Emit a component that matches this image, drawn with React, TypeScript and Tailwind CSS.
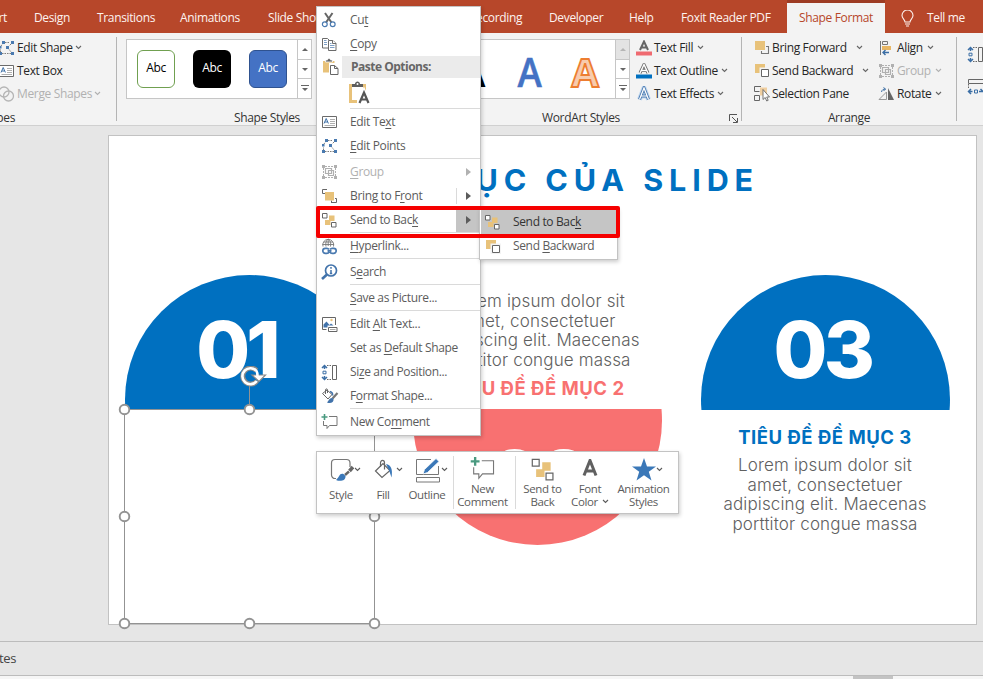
import React from 'react';

type IconProps = { className?: string };

const Caret = ({ className = '' }: IconProps) => (
  <svg className={`shrink-0 ${className}`} width="7" height="5" viewBox="0 0 7 5" fill="none" stroke="currentColor" strokeWidth="1.1">
    <path d="M1 1l2.500 2.500L6 1" />
  </svg>
);

const EditPointsIcon = () => (
  <svg className="shrink-0" width="17" height="16" viewBox="0 0 17 16" fill="none">
    <path d="M2.500 12V9M3 6l2-3M7 2.500h5M13 4l-3.500 3.500 4 5M4 13.500h9" stroke="#7d7d7d" strokeDasharray="1.500 1" />
    <path d="M4 1h3v3H4zM13 1h3v3h-3zM8 6h3v3H8zM1 6h2.500v2.500H1z" fill="#4a7ab0" />
    <path d="M1 12h3v3H1zM13 12h3v3h-3z" fill="#4a7ab0" />
  </svg>
);

const TextBoxIcon = () => (
  <svg className="shrink-0" width="17" height="14" viewBox="0 0 17 14" fill="none">
    <path d="M1.500 1.500h14v11h-14z" fill="#fff" stroke="#6b6b6b" />
    <path d="M3 8.500L5.200 3.500 7.400 8.500M4 7h2.500" stroke="#3b6ea5" />
    <path d="M9 4.500h5M9 6.500h5M9 8.500h5M3.500 10.500H14" stroke="#9a9a9a" strokeWidth=".8" />
  </svg>
);

const MergeIcon = () => (
  <svg className="shrink-0" width="17" height="16" viewBox="0 0 17 16" fill="none" stroke="#b5b5b5" strokeWidth="1.300">
    <circle cx="6" cy="6" r="5" />
    <circle cx="10.500" cy="10" r="5" />
  </svg>
);

const GroupIcon = () => (
  <svg className="shrink-0" width="17" height="16" viewBox="0 0 17 16" fill="none" stroke="#b0b0b0">
    <path d="M4 2.500h9M4 13.500h9M2.500 4v8M14.500 4v8" strokeDasharray="2 1" />
    <path d="M4.500 4.500h6v5h-6zM7.500 6.500h5v5h-5z" strokeWidth="1.200" />
    <path d="M1 1h3v3H1zM13 1h3v3h-3zM1 12h3v3H1zM13 12h3v3h-3z" fill="#b0b0b0" stroke="none" />
  </svg>
);

const SendBackIcon = ({ size = 17, className = '' }: { size?: number; className?: string }) => (
  <svg className={`shrink-0 ${className}`} width={size} height={size} viewBox="0 0 17 17" fill="none">
    <path d="M8 3.500h5.500v5.500H8zM4 8h5.500v5H4z" fill="#e8c27a" />
    <path d="M1.500 1.500h4.500V6H1.500zM10.500 10.500h4.500V15h-4.500z" fill="#fff" stroke="#666" strokeWidth={size > 20 ? 0.8 : 1} />
  </svg>
);

const BringFrontIcon = () => (
  <svg className="shrink-0" width="17" height="16" viewBox="0 0 17 16" fill="none">
    <path d="M1.500 5.500V1.500H6M4 5.500H1.500M10 14.500h5.500V10.500H14M10.500 12.500v2" stroke="#666" />
    <path d="M4 4h9v8.500H4z" fill="#e8c27a" />
  </svg>
);

const ForwardIcon = () => (
  <svg className="shrink-0" width="16" height="15" viewBox="0 0 16 15" fill="none">
    <path d="M1 1h10v9H1z" fill="#e8c27a" />
    <path d="M12 6.500h2.500V13.500H7.500V11" stroke="#777" strokeWidth="1.100" />
  </svg>
);

const BackwardIcon = () => (
  <svg className="shrink-0" width="16" height="15" viewBox="0 0 16 15" fill="none">
    <path d="M1 1h10v9H1z" fill="#e8c27a" />
    <path d="M7 6h7.500v7.500H7z" fill="#fff" stroke="#f3f3f3" strokeWidth="3" />
    <path d="M7.500 6.500h7v7h-7z" fill="#fff" stroke="#666" />
  </svg>
);

const SelectionPaneIcon = () => (
  <svg className="shrink-0" width="17" height="17" viewBox="0 0 17 17" fill="none">
    <path d="M7 2.500h7v8H7z" fill="#f0cfa0" />
    <path d="M6.500 6.500h-5v-5H8M1.500 10.500h5v5h-5z" stroke="#666" />
    <path d="M10 4.500v10l2.200-2 1.500 3.500 1.500-.7-1.500-3.300h2.800z" fill="#fff" stroke="#666" strokeWidth=".9" />
  </svg>
);

const AlignIcon = () => (
  <svg className="shrink-0" width="15" height="16" viewBox="0 0 15 16" fill="none">
    <path d="M1.500 1v14" stroke="#777" />
    <path d="M3.500 1.500h5v3h-5z" stroke="#777" />
    <path d="M3 6h9v4H3z" fill="#e8b765" />
    <path d="M10 12.500H4M6.500 10L4 12.500 6.500 15" stroke="#3b6ea5" strokeWidth="1.400" />
  </svg>
);

const RotateIcon = () => (
  <svg className="shrink-0" width="17" height="14" viewBox="0 0 17 14" fill="none">
    <path d="M8.500 5v7.500H1z" stroke="#999" />
    <path d="M10 1v12h6z" fill="#666" />
    <path d="M3.500 5c.5-2.500 2-3 4-3M5.500.5L7.500 2 5.500 4" stroke="#3b6ea5" />
  </svg>
);

const ScissorsIcon = () => (
  <svg width="16" height="16" viewBox="0 0 16 16" fill="none">
    <path d="M4 1l6.500 9.500M11.500 1L5 10.500" stroke="#666" strokeWidth="2" />
    <circle cx="3.800" cy="12.200" r="2.400" stroke="#4a7ab0" strokeWidth="1.200" />
    <circle cx="11.700" cy="12.200" r="2.400" stroke="#4a7ab0" strokeWidth="1.200" />
  </svg>
);

const CopyIcon = () => (
  <svg width="16" height="15" viewBox="0 0 16 15" fill="#fff" stroke="#6b6b6b">
    <path d="M1.500 1.500h5l2.500 2.500v7H1.500z" />
    <path d="M3 5.500h3M3 7.500h3M3 3.500h2.500" stroke="#7fa0c5" />
    <path d="M7.500 3.500h4.500l3 3v7H7.500z" />
    <path d="M11.500 3.500v3H15" />
    <path d="M9 8.500h4.500M9 10.500h4.500M9 6.500h1.500" stroke="#7fa0c5" />
  </svg>
);

const PasteIcon = () => (
  <svg width="17" height="17" viewBox="0 0 17 17" fill="none">
    <path d="M1 3h11.500v11.500H1z" fill="#e8c27a" />
    <path d="M3.500 4V2h2c0-2 3-2 3 0h2v2z" fill="#666" stroke="#fff" strokeWidth=".8" />
    <path d="M8.500 6.500h4l3.500 3.500v6H8.500z" fill="#fff" stroke="#fff" strokeWidth="3" />
    <path d="M8.500 7.500h4l3.500 3v6H8.500zM12.500 7.500v3H16" fill="#fff" stroke="#666" />
  </svg>
);

const PasteTextIcon = () => (
  <svg className="shrink-0" width="24" height="24" viewBox="0 0 24 24" fill="none">
    <path d="M10 20.500H3.500V4.500h14v6" stroke="#e8c27a" strokeWidth="3" />
    <path d="M5 6V3h3c0-3.500 5-3.500 5 0h3v3z" fill="#5e5e5e" />
    <circle cx="10.500" cy="3" r="1" fill="#fff" />
    <path d="M12.500 21.500L17 11.500l4.500 10M14 18.500h6" stroke="#fff" strokeWidth="5" />
    <path d="M12.500 22L17 11.500 21.500 22M14 18.500h6" stroke="#555" strokeWidth="2.200" />
  </svg>
);

const LinkIcon = () => (
  <svg width="17" height="17" viewBox="0 0 17 17" fill="none">
    <path d="M2 8.500a5.500 5.500 0 1 1 10.500 0M2.500 4h9.500M1.500 6.500h11.500M7.200 1v7M5 8.500c-.7-3 0-6 2.200-7.500C9.500 2.500 10.200 5.500 9.500 8.500" stroke="#777" strokeWidth=".9" />
    <path d="M8 11.500a2.700 2.700 0 0 0-2.500-1.200H4.300a2.500 2.500 0 0 0 0 5h1.500c1.300 0 2-.7 2.400-1.500M6.500 12.800h4M9 11.500a2.700 2.700 0 0 1 2.500-1.200h1.200a2.500 2.500 0 0 1 0 5h-1.500c-1.300 0-2-.7-2.400-1.500" stroke="#4a7ab0" strokeWidth="1.700" />
  </svg>
);

const SearchIcon = () => (
  <svg width="17" height="16" viewBox="0 0 17 16" fill="none" stroke="#4273ab">
    <circle cx="10" cy="6.500" r="5.500" strokeWidth="1.700" />
    <path d="M6 10.500l-5 4.500" strokeWidth="2.600" />
    <path d="M10 6v3.500M10 3v1.700M8.800 9.500h2.400" strokeWidth="1.500" />
  </svg>
);

const AltTextIcon = () => (
  <svg width="17" height="17" viewBox="0 0 17 17" fill="none">
    <path d="M5.500 13.500h-4v-12h13V9" stroke="#666" />
    <path d="M2.500 11.500V8.500l3-3 3 3.500 1.500-1.500 2.500 2H6.500v2z" fill="#4273ab" />
    <circle cx="10.500" cy="4" r="1.200" fill="#e8c27a" />
    <path d="M7.500 11.500h8.500v4H7.500z" fill="#fff" stroke="#666" />
    <path d="M9 13.500h5.500" stroke="#aaa" />
  </svg>
);

const SizeIcon = ({ className = '' }: IconProps) => (
  <svg className={`shrink-0 ${className}`} width="17" height="17" viewBox="0 0 17 17" fill="none">
    <path d="M6 1.500h5M6 15.500h5" stroke="#666" strokeDasharray="1.500 1" />
    <path d="M11.500 1.500h4v14h-4z" stroke="#666" />
    <path d="M3.500 1.500V5M1 4l2.500-2.500L6 4M3.500 12v3.500M1 13l2.500 2.500L6 13" stroke="#3b6ea5" strokeWidth="1.500" />
    <path d="M2 7.200h3v2.600H2z" stroke="#3b6ea5" />
  </svg>
);

const WidthIcon = () => (
  <svg width="17" height="17" viewBox="0 0 17 17" fill="none">
    <path d="M16.500 1.500h-15v4h15" stroke="#666" />
    <path d="M1.500 6v5" stroke="#666" strokeDasharray="1.500 1" />
    <path d="M1 13.500h4.500M4 11l-2.500 2.500L4 16M12 13.500h4.500M13.500 11l2.500 2.500" stroke="#3b6ea5" strokeWidth="1.500" />
    <path d="M7.500 12h3v3h-3z" stroke="#3b6ea5" />
  </svg>
);

const FormatIcon = () => (
  <svg width="18" height="17" viewBox="0 0 18 17" fill="none">
    <path d="M1.500 5.500L6 2l5 4.500L7 11zM4.500 6V2c0-1.500 2-1.500 2 0v3" stroke="#666" />
    <path d="M9 3.500c2 .5 3 2 2.500 4" stroke="#4273ab" strokeWidth="1.500" />
    <path d="M16.500 5l-5 5.500" stroke="#777" strokeWidth="2.200" />
    <path d="M11.500 10c-3-.5-3.500 2-5.500 4.500 3.500 1.500 7 0 6.500-3.500z" fill="#4273ab" />
  </svg>
);

const CommentIcon = ({ size = 17, stroke = 1 }: { size?: number; stroke?: number }) => (
  <svg className="shrink-0" width={size} height={size} viewBox="0 0 17 17" fill="none">
    <path d="M8 2.500h8v9H8.500L6 14.500v-3H2.500V7" stroke="#777" strokeWidth={stroke} />
    <path d="M3.500 0v6M.5 3h6" stroke="#4a9a80" strokeWidth="1.600" />
  </svg>
);

const Gallery = ({ children, disabledUp }: { children: React.ReactNode; disabledUp?: boolean }) => (
  <div className="flex h-[60px] w-full border border-[#c6c6c6] bg-white">
    <div className="flex flex-1 items-center">{children}</div>
    <div className="flex w-[14px] flex-col border-l border-[#c6c6c6] text-[#666]">
      <div className={`flex h-5 items-center justify-center border-b border-[#c6c6c6] ${disabledUp ? 'bg-[#e3e3e3] text-[#b5b5b5]' : ''}`}>
        <svg width="6" height="3" viewBox="0 0 6 3" fill="currentColor"><path d="M0 3l3-3 3 3z" /></svg>
      </div>
      <div className="flex h-[19px] items-center justify-center border-b border-[#c6c6c6]">
        <svg width="6" height="3" viewBox="0 0 6 3" fill="currentColor"><path d="M0 0l3 3 3-3z" /></svg>
      </div>
      <div className="flex h-[19px] items-center justify-center">
        <svg width="8" height="7" viewBox="0 0 8 7" fill="currentColor"><path d="M0 0h8v1H0zM1 3l3 3 3-3z" /></svg>
      </div>
    </div>
  </div>
);

type RowProps = { icon: React.ReactNode; label: string; caret?: string; disabled?: boolean };

const RibbonRow = ({ icon, label, caret, disabled }: RowProps) => (
  <div className={`flex h-[23px] items-center whitespace-nowrap ${disabled ? 'text-[#b1b1b1]' : 'text-[#262626]'}`}>
    <span className="mr-[2px] flex w-[17px] shrink-0 justify-center">{icon}</span>
    {label}
    {caret && <Caret className={`${caret} ${disabled ? '' : 'text-[#666]'}`} />}
  </div>
);

const tabs = [
  { label: 'Design', width: 'w-[63px]' },
  { label: 'Transitions', width: 'w-[83px]' },
  { label: 'Animations', width: 'w-[88px]' },
  { label: 'Slide Show', width: 'w-[117px]' },
  { label: 'Review', width: 'w-[84px]' },
  { label: 'Recording', width: 'w-[80px]' },
  { label: 'Developer', width: 'w-[80px]' },
  { label: 'Help', width: 'w-[52px]' },
  { label: 'Foxit Reader PDF', width: 'w-[106px]' },
];

function TabBar() {
  return (
    <div className="flex h-[33px] bg-[#b7472a] pt-[3px] text-[#fdf3f0]">
      <div className="flex w-[34px] shrink-0 items-center">
        <span className="flex w-[7px] justify-end">Insert</span>
      </div>
      {tabs.map((tab) => (
        <div key={tab.label} className={`flex shrink-0 items-center whitespace-nowrap ${tab.width}`}>
          {tab.label}
        </div>
      ))}
      <div className="-mt-[3px] flex w-[98px] shrink-0 items-center justify-center border-t-[3px] border-[#9d3c24] bg-[#f3f3f3] text-[#b7472a]">
        Shape Format
      </div>
      <div className="ml-4 flex items-center gap-[13px] whitespace-nowrap">
        <svg width="13" height="17" viewBox="0 0 13 17" fill="none" stroke="currentColor" strokeWidth="1.100">
          <path d="M4 12c0-2.500-3-3.500-3-6.500a5.500 5.500 0 0 1 11 0c0 3-3 4-3 6.500zM4 14h5M5 16h3" />
        </svg>
        Tell me
      </div>
    </div>
  );
}

const GroupLabel = ({ children }: { children: React.ReactNode }) => (
  <div className="mt-1 flex h-[18px] items-center justify-center whitespace-nowrap text-[#333]">{children}</div>
);

const Divider = () => <div className="mt-[1px] h-[84px] w-px shrink-0 bg-[#b4b4b4]" />;

function Ribbon() {
  return (
    <div className="flex h-[93px] border-b border-[#d0d0d0] bg-[#f3f3f3] pt-[3px]">
      <div className="w-[116px] shrink-0 overflow-hidden">
        <div className="-ml-[2px]">
          <RibbonRow icon={<EditPointsIcon />} label="Edit Shape" caret="ml-[2px]" />
          <RibbonRow icon={<TextBoxIcon />} label="Text Box" />
          <RibbonRow icon={<MergeIcon />} label="Merge Shapes" caret="ml-[2px]" disabled />
        </div>
        <div className="mt-1 flex h-[18px] w-[15px] items-center justify-end whitespace-nowrap text-[#333]">Insert Shapes</div>
      </div>
      <Divider />
      <div className="w-[300px] shrink-0 pl-[9px]">
        <div className="h-[69px] w-[186px] pt-[3px]">
          <Gallery>
            <div className="flex gap-[18px] pl-[10px] leading-none">
              <div className="flex size-[38px] items-center justify-center rounded-md border border-[#70a050] pb-[2px] text-black">Abc</div>
              <div className="flex size-[38px] items-center justify-center rounded-md bg-black pb-[2px] text-white">Abc</div>
              <div className="flex size-[38px] items-center justify-center rounded-md border border-[#2f528f] bg-[#4472c4] pb-[2px] text-white">Abc</div>
            </div>
          </Gallery>
        </div>
        <div className="pr-[9px]">
          <GroupLabel>Shape Styles</GroupLabel>
        </div>
      </div>
      <div className="w-[324px] shrink-0 pl-[9px]">
        <div className="flex">
          <div className="h-[69px] w-[204px] pt-[3px]">
            <Gallery disabledUp>
              <svg width="188" height="58" viewBox="0 0 188 58" fontFamily="'Open Sans', sans-serif" fontSize="40" fontWeight="600" textAnchor="middle">
                <text x="45" y="47" fill="#000">A</text>
                <text x="102.500" y="47" fill="#4472c4" textLength="24" lengthAdjust="spacingAndGlyphs" stroke="#4472c4" strokeWidth=".5">A</text>
                <text x="158" y="47" fill="#f8cbad" stroke="#ed7d31" strokeWidth="1.800" fontWeight="700" textLength="27" lengthAdjust="spacingAndGlyphs">A</text>
              </svg>
            </Gallery>
          </div>
          <div className="ml-[5px]">
            <RibbonRow
              icon={
                <svg width="16" height="16" viewBox="0 0 16 16" fill="none">
                  <path d="M4 10L8 1.500 12 10M5.500 7.500h5" stroke="#666" strokeWidth="2" />
                  <path d="M0 11.500h16v4H0z" fill="#ef6a70" />
                </svg>
              }
              label="Text Fill"
              caret="ml-1"
            />
            <RibbonRow
              icon={
                <svg width="16" height="16" viewBox="0 0 16 16" fill="none">
                  <path d="M4 10L8 1.500 12 10M5.500 7.500h5" stroke="#666" strokeWidth="3" />
                  <path d="M4 10L8 1.500 12 10M5.500 7.500h5" stroke="#fff" strokeWidth="1.400" />
                  <path d="M0 11.500h16v4H0z" fill="#0070c0" />
                </svg>
              }
              label="Text Outline"
              caret="ml-[3px]"
            />
            <RibbonRow
              icon={
                <svg width="16" height="16" viewBox="0 0 16 16" fill="none">
                  <path d="M3.500 13.500L8 2l4.500 11.500M5 10h6" stroke="#c3d9f0" strokeWidth="5" strokeLinejoin="round" />
                  <path d="M3.500 13.500L8 2l4.500 11.500M5 10h6" stroke="#4a7ab0" strokeWidth="3" />
                  <path d="M3.500 13.500L8 2l4.500 11.500M5 10h6" stroke="#fff" strokeWidth="1.200" />
                </svg>
              }
              label="Text Effects"
              caret="ml-[3px]"
            />
          </div>
        </div>
        <div className="mt-1 flex h-[18px] items-center text-[#333]">
          <span className="ml-[116px] flex-1 whitespace-nowrap">WordArt Styles</span>
          <svg className="mr-[3px]" width="9" height="9" viewBox="0 0 9 9" fill="none" stroke="#555">
            <path d="M.5 7V.5H8M3 3l5 5M8.500 4v4.500H4" />
          </svg>
        </div>
      </div>
      <Divider />
      <div className="w-[214px] shrink-0">
        <div className="flex pl-[11px]">
          <div className="w-[125px]">
            <RibbonRow icon={<ForwardIcon />} label="Bring Forward" caret="ml-[9px]" />
            <RibbonRow icon={<BackwardIcon />} label="Send Backward" caret="ml-[9px]" />
            <RibbonRow icon={<SelectionPaneIcon />} label="Selection Pane" />
          </div>
          <div>
            <RibbonRow icon={<AlignIcon />} label="Align" caret="ml-1" />
            <RibbonRow icon={<GroupIcon />} label="Group" caret="ml-1" disabled />
            <RibbonRow icon={<RotateIcon />} label="Rotate" caret="ml-[3px]" />
          </div>
        </div>
        <GroupLabel>Arrange</GroupLabel>
      </div>
      <Divider />
      <div className="mt-[10px] ml-[10px] flex w-4 flex-col gap-[15px] overflow-hidden">
        <SizeIcon />
        <WidthIcon />
      </div>
    </div>
  );
}

const bodyLines = ['Lorem ipsum dolor sit', 'amet, consectetuer', 'adipiscing elit. Maecenas', 'porttitor congue massa'];

const Body = () => (
  <div className="text-center text-[17px] leading-[19.6px] font-light tracking-[0.15px] whitespace-nowrap text-[#606060]">
    {bodyLines.map((line) => (
      <div key={line}>{line}</div>
    ))}
  </div>
);

const Handle = ({ x, y }: { x: number; y: number }) => (
  <circle cx={x} cy={y} r="4.800" fill="#fff" stroke="#939393" strokeWidth="1.900" />
);

// Positions on the slide are measured from its top-left corner.
function Slide() {
  return (
    <div className="relative mt-[9px] ml-[108px] h-[490px] w-[869px] border border-[#c2c2c2] bg-white font-[Inter,'Noto_Sans',sans-serif]">
      <div className="absolute top-[24px] right-[217px] text-[30.5px] leading-[40px] font-bold tracking-[5.9px] whitespace-nowrap text-[#0070c0]">
        MỤC LỤC CỦA SLIDE
      </div>

      <div className="absolute top-[139px] left-[16px] h-[135px] w-[249px] overflow-hidden">
        <div className="h-[249px] rounded-full bg-[#0070c0] pt-[25px] pr-[26px] text-center text-[78px] leading-[100px] font-extrabold tracking-[-4px] text-white">01</div>
      </div>

      <div className="absolute top-[156px] left-[304px] w-[250px]">
        <Body />
      </div>
      <div className="absolute top-[240px] left-[304px] w-[250px] text-center text-[18.5px] leading-6 font-bold tracking-[0.5px] whitespace-nowrap text-[#f87171]">
        TIÊU ĐỀ ĐỀ MỤC 2
      </div>
      <div className="absolute top-[273px] left-[304px] flex h-[136px] w-[249px] items-end overflow-hidden">
        <div className="h-[249px] w-[249px] shrink-0 rounded-full bg-[#f87171] pt-[133px] text-center text-[78px] leading-[100px] font-extrabold tracking-[-2px] text-white">02</div>
      </div>

      <div className="absolute top-[139px] left-[592px] h-[135px] w-[249px] overflow-hidden">
        <div className="h-[249px] rounded-full bg-[#0070c0] pt-[25px] pr-[6px] text-center text-[78px] leading-[100px] font-extrabold tracking-[-3.500px] text-white">03</div>
      </div>
      <div className="absolute top-[289px] left-[591px] w-[250px] text-center text-[18.5px] leading-6 font-bold tracking-[0.5px] whitespace-nowrap text-[#0070c0]">
        TIÊU ĐỀ ĐỀ MỤC 3
      </div>
      <div className="absolute top-[320px] left-[591px] w-[250px]">
        <Body />
      </div>

      <svg className="absolute top-[230px] left-[9px]" width="264" height="265" viewBox="0 0 264 265" fill="none">
        <path d="M6.500 43.500h250V257.500H6.500zM131.500 19v20" stroke="#939393" />
        <path d="M138.500 4.500a8 8 0 1 0 .5 10.500" stroke="#8a8a8a" strokeWidth="5" />
        <path d="M134 9h13.500l-6.500 6.500z" fill="#fff" stroke="#8a8a8a" strokeWidth="1.200" />
        <path d="M139.500 10.500c0-2-.3-4.500-1-5.500a8 8 0 1 0 .3 10" stroke="#fff" strokeWidth="2.600" />
        <Handle x={6.5} y={43.5} />
        <Handle x={131.5} y={43.5} />
        <Handle x={6.5} y={150.5} />
        <Handle x={256.5} y={150.5} />
        <Handle x={6.5} y={257.5} />
        <Handle x={131.5} y={257.5} />
        <Handle x={256.5} y={257.5} />
      </svg>
    </div>
  );
}

// Underlines the access key: the letter that follows "_".
const Label = ({ text }: { text: string }) => {
  const [before, rest] = text.split('_');
  return (
    <span className="whitespace-nowrap">
      {before}
      {rest && <span className="underline underline-offset-2">{rest[0]}</span>}
      {rest?.slice(1)}
    </span>
  );
};

const RightArrow = () => (
  <svg width="5" height="8" viewBox="0 0 5 8" fill="currentColor"><path d="M0 0l5 4-5 4z" /></svg>
);

type MenuItemProps = { icon?: React.ReactNode; label: string; disabled?: boolean; children?: React.ReactNode };

const MenuItem = ({ icon, label, disabled, children }: MenuItemProps) => (
  <div className={`flex h-6 items-center ${disabled ? 'text-[#b1b1b1]' : ''}`}>
    <span className="flex w-[33px] shrink-0 pl-1">{icon}</span>
    <span className="flex-1"><Label text={label} /></span>
    {children}
  </div>
);

const Separator = () => <div className="ml-[33px] h-[2px] border-t border-[#dadada]" />;

function ContextMenu() {
  return (
    <div className="absolute top-[6px] left-[316px] h-[430px] w-[165px] border border-[#c3c3c3] bg-white pt-px text-[#5c5c5c] shadow-[1px_2px_4px_rgba(0,0,0,0.2)]">
      <MenuItem icon={<ScissorsIcon />} label="Cu_t" />
      <MenuItem icon={<CopyIcon />} label="_Copy" />
      <div className="flex h-[22px]">
        <span className="w-[25px] shrink-0 pt-[2px] pl-[5px]"><PasteIcon /></span>
        <span className="flex flex-1 items-center bg-[#ebebeb] pl-[9px] font-bold tracking-[-0.5px] text-[#666]">Paste Options:</span>
      </div>
      <div className="flex h-[30px] pt-[3px] pl-[30px]"><PasteTextIcon /></div>
      <Separator />
      <MenuItem icon={<TextBoxIcon />} label="Edit Te_xt" />
      <MenuItem icon={<EditPointsIcon />} label="_Edit Points" />
      <Separator />
      <MenuItem icon={<GroupIcon />} label="_Group" disabled>
        <span className="pr-[9px]"><RightArrow /></span>
      </MenuItem>
      <MenuItem icon={<BringFrontIcon />} label="Bring to F_ront">
        <span className="flex h-4 w-6 items-center border-l border-[#dadada] pl-[9px]"><RightArrow /></span>
      </MenuItem>
      <MenuItem icon={<SendBackIcon />} label="Send to Bac_k">
        <span className="flex h-6 w-6 items-center bg-[#c5c5c5] pl-[10px]"><RightArrow /></span>
      </MenuItem>
      <Separator />
      <MenuItem icon={<LinkIcon />} label="_Hyperlink..." />
      <Separator />
      <MenuItem icon={<SearchIcon />} label="S_earch" />
      <Separator />
      <MenuItem label="_Save as Picture..." />
      <Separator />
      <MenuItem icon={<AltTextIcon />} label="Edit _Alt Text..." />
      <MenuItem label="Set as _Default Shape" />
      <MenuItem icon={<SizeIcon />} label="Si_ze and Position..." />
      <MenuItem icon={<FormatIcon />} label="F_ormat Shape..." />
      <Separator />
      <MenuItem icon={<CommentIcon />} label="New Co_mment" />
    </div>
  );
}

function SubMenu() {
  return (
    <div className="absolute top-[208px] left-[479px] h-[52px] w-[139px] border border-[#c3c3c3] bg-white p-px text-[#5c5c5c] shadow-[1px_2px_4px_rgba(0,0,0,0.2)]">
      <div className="flex h-6 items-center bg-[#c5c5c5] text-[#333]">
        <span className="w-8 shrink-0 pl-[3px]"><SendBackIcon /></span>
        <Label text="Send to Bac_k" />
      </div>
      <div className="flex h-6 items-center">
        <span className="w-8 shrink-0 pl-1"><BackwardIcon /></span>
        <Label text="Send _Backward" />
      </div>
    </div>
  );
}

type ToolProps = { icon: React.ReactNode; lines: string[]; width: string; caret?: boolean; lineCaret?: boolean };

const Tool = ({ icon, lines, width, caret, lineCaret }: ToolProps) => (
  <div className={`flex shrink-0 flex-col items-center text-[11.5px] leading-[13px] tracking-[-0.35px] ${width}`}>
    <div className="flex h-[30px] items-center pt-[5px]">
      {icon}
      {caret && <Caret />}
    </div>
    <div className={`text-center whitespace-nowrap ${lines.length === 1 ? 'pt-[6px]' : ''}`}>
      {lines.map((line, i) => (
        <div key={line} className="flex items-center justify-center gap-1">
          {line}
          {lineCaret && i === 1 && <Caret />}
        </div>
      ))}
    </div>
  </div>
);

function MiniToolbar() {
  return (
    <div className="absolute top-[451px] left-[316px] flex h-[63px] w-[363px] border border-[#c3c3c3] bg-white text-[#5c5c5c] shadow-[1px_2px_4px_rgba(0,0,0,0.2)]">
      <Tool
        width="w-[48px]"
        caret
        lines={['Style']}
        icon={
          <svg className="ml-[8px]" width="24" height="26" viewBox="0 0 24 26" fill="none">
            <path d="M6 21.500H5a3.500 3.500 0 0 1-3.500-3.500V6A3.500 3.500 0 0 1 5 2.500h11.500A3.500 3.500 0 0 1 20 6v4" stroke="#777" strokeWidth="1.200" />
            <path d="M23 10l-3.500 4" stroke="#666" strokeWidth="3.600" />
            <path d="M19 14.500L15 18" stroke="#666" strokeWidth="2.400" />
            <path d="M13.500 17c-4-1.500-4 3-7.500 6 4.500 2 10 .5 9.500-4z" fill="#3b78b8" />
          </svg>
        }
      />
      <Tool
        width="w-[36px]"
        caret
        lines={['Fill']}
        icon={
          <svg className="ml-[11px]" width="22" height="22" viewBox="0 0 22 22" fill="none">
            <path d="M1.500 12L9 4.500l7 7-8 7z" stroke="#666" strokeWidth="1.200" />
            <path d="M6.500 8V4c0-3.500 4-3.500 4 0v6.500" stroke="#666" strokeWidth="1.200" />
            <path d="M12 5c5 1 7 5 5.500 13.500L15 11z" fill="#3b78b8" />
          </svg>
        }
      />
      <Tool
        width="w-[52px]"
        caret
        lines={['Outline']}
        icon={
          <svg className="ml-2" width="26" height="26" viewBox="0 0 26 26" fill="none">
            <path d="M16 2.500H1.500v15h22V9M1.500 20.500h23v4.500h-23z" stroke="#777" />
            <path d="M8 17l1.500-4.500L21 1.500l3 3-11.500 11z" fill="#3b78b8" stroke="#fff" strokeWidth=".8" />
          </svg>
        }
      />
      <div className="my-1 w-px bg-[#dadada]" />
      <Tool width="w-[57px]" lines={['New', 'Comment']} icon={<CommentIcon size={25} stroke={0.75} />} />
      <div className="my-1 ml-1 w-px bg-[#dadada]" />
      <Tool width="w-[53px]" lines={['Send to', 'Back']} icon={<SendBackIcon size={26} />} />
      <Tool
        width="w-[42px]"
        lineCaret
        lines={['Font', 'Color']}
        icon={
          <svg className="-mt-[3px]" width="18" height="18" viewBox="0 0 18 18" fill="none">
            <path d="M3 16.500L9 1.500l6 15M5 12h8" stroke="#606060" strokeWidth="3" />
          </svg>
        }
      />
      <Tool
        width="w-[65px]"
        caret
        lines={['Animation', 'Styles']}
        icon={
          <svg className="ml-2" width="24" height="23" viewBox="0 0 24 23">
            <path d="M12 0l3 8.500h9l-7.200 5.300L19.500 22.500 12 17.200 4.500 22.500l2.700-8.700L0 8.500h9z" fill="#3b78b8" />
          </svg>
        }
      />
    </div>
  );
}

export default function App() {
  return (
    <div className="relative flex h-[679px] w-[983px] flex-col overflow-hidden bg-[#e6e6e6] font-['Open_Sans','Noto_Sans',sans-serif] text-[12px] leading-4 tracking-[-0.35px]">
      <TabBar />
      <Ribbon />
      <Slide />
      <div className="mt-4 flex h-[35px] items-center border-y border-[#bcbcbc] pb-[2px] text-[#444]">
        <span className="flex w-4 justify-end text-[13px]">Notes</span>
      </div>
      <div className="flex-1 bg-[#f6f6f6]">
        <div className="ml-[853px] h-full w-10 bg-[#c3c3c3]" />
      </div>
      <ContextMenu />
      <SubMenu />
      <div className="absolute top-[206px] left-[316px] h-8 w-[304px] rounded-[2px] border-4 border-[#f50000]" />
      <MiniToolbar />
    </div>
  );
}
